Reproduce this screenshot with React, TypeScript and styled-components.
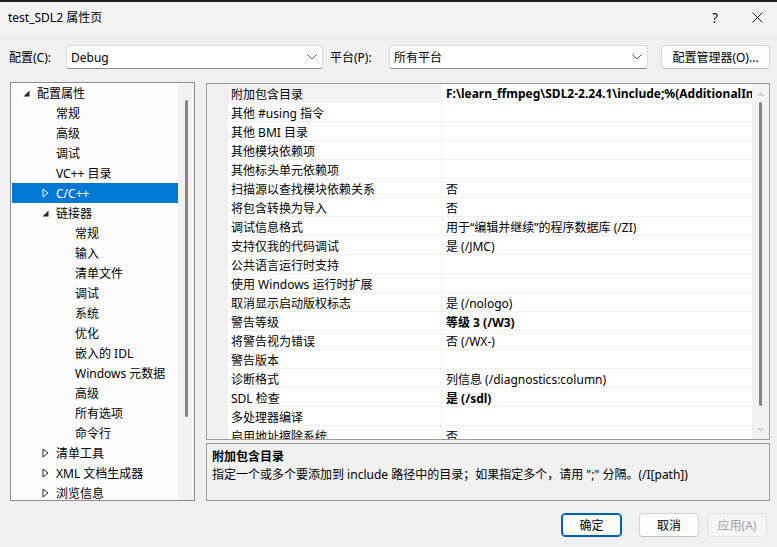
import React from "react";
import styled, { createGlobalStyle, css } from "styled-components";

const FONT = `"Noto Sans", "Noto Sans CJK SC", sans-serif`;

const GlobalStyle = createGlobalStyle`
  html, body { margin: 0; padding: 0; }
  body {
    background: #f0f0f0;
    font-family: ${FONT};
    font-size: 12px;
    color: #000;
  }
  * { box-sizing: border-box; }
`;

const Window = styled.div`
  width: 777px;
  height: 547px;
  display: flex;
  flex-direction: column;
  background: #f0f0f0;
  overflow: hidden;
`;

const TopEdge = styled.div`
  height: 2px;
  background: #202020;
  flex: none;
`;

const TitleBar = styled.div`
  height: 31px;
  flex: none;
  display: flex;
  align-items: center;
  padding-left: 8px;
  background: #f3f3f3;
`;

const TitleText = styled.div`
  flex: 1;
  font-size: 12px;
  line-height: 16px;
`;

const TitleButton = styled.div<{ $w: number }>`
  width: ${(p) => p.$w}px;
  height: 31px;
  display: flex;
  align-items: center;
  justify-content: center;
  font-size: 14px;
  color: #1a1a1a;
`;

const ConfigRow = styled.div`
  flex: none;
  display: flex;
  align-items: center;
  height: 24px;
  margin-top: 12px;
  padding-left: 9px;
`;

const FieldLabel = styled.div<{ $w: number; $pad?: number }>`
  width: ${(p) => p.$w}px;
  padding-left: ${(p) => p.$pad ?? 0}px;
  flex: none;
  white-space: nowrap;
`;

const Select = styled.div<{ $w: number }>`
  width: ${(p) => p.$w}px;
  height: 24px;
  flex: none;
  display: flex;
  align-items: center;
  justify-content: space-between;
  padding: 0 5px 0 4px;
  background: #ffffff;
  border: 1px solid #d9d9d9;
  border-bottom-color: #8a8a8a;
  border-radius: 3px;
`;

const PushButton = styled.div<{ $w: number; $primary?: boolean; $disabled?: boolean }>`
  width: ${(p) => p.$w}px;
  height: 24px;
  flex: none;
  display: flex;
  align-items: center;
  justify-content: center;
  background: #fdfdfd;
  border: 1px solid #d3d3d3;
  border-bottom-color: #c0c0c0;
  border-radius: 4px;
  white-space: nowrap;
  ${(p) =>
    p.$primary &&
    css`
      border: 1px solid #005fb8;
      box-shadow: inset 0 0 0 1px #005fb8;
      margin-right: 9px;
    `}
  ${(p) =>
    p.$disabled &&
    css`
      color: #a2a2a2;
      background: #f5f5f5;
      border-color: #e3e3e3;
    `}
`;

const Main = styled.div`
  flex: none;
  display: flex;
  gap: 11px;
  margin-top: 13px;
  padding: 0 7px 0 10px;
  height: 420px;
`;

const Tree = styled.div`
  width: 185px;
  height: 419px;
  flex: none;
  display: flex;
  border: 1px solid #8e8e8e;
  background: #fcfcfc;
  overflow: hidden;
`;

const TreeList = styled.div`
  flex: 1;
  padding: 0 0 0 1px;
`;

const TreeRow = styled.div<{ $level: number; $selected?: boolean }>`
  height: 20px;
  display: flex;
  align-items: center;
  padding-left: ${(p) => 6 + p.$level * 19}px;
  white-space: nowrap;
  ${(p) =>
    p.$selected &&
    css`
      background: #0078d4;
      color: #ffffff;
    `}
`;

const Expander = styled.div`
  width: 19px;
  height: 20px;
  flex: none;
  display: flex;
  align-items: center;
  justify-content: flex-start;
  padding-left: 5px;
`;

const VScroll = styled.div<{ $w: number }>`
  width: ${(p) => p.$w}px;
  flex: none;
  background: #f1f1f1;
  display: flex;
  flex-direction: column;
  align-items: center;
`;

const ScrollArrow = styled.div`
  height: 18px;
  flex: none;
  display: flex;
  align-items: center;
  justify-content: center;
`;

const ScrollSpacer = styled.div`
  flex: 1;
`;

const Thumb = styled.div<{ $top: number; $height: number }>`
  width: 3px;
  margin-top: ${(p) => p.$top}px;
  height: ${(p) => p.$height}px;
  background: #858585;
  border-radius: 2px;
  flex: none;
`;

const RightCol = styled.div`
  width: 564px;
  flex: none;
  display: flex;
  flex-direction: column;
  gap: 3px;
  padding-top: 1px;
`;

const Grid = styled.div`
  height: 357px;
  flex: none;
  display: flex;
  border: 1px solid #9a9a9a;
  background: #ffffff;
  overflow: hidden;
`;

const GridBody = styled.div`
  flex: 1;
  display: flex;
  overflow: hidden;
`;

const Gutter = styled.div`
  width: 21px;
  flex: none;
  background: #f0f0f0;
`;

const Rows = styled.div`
  flex: 1;
  display: flex;
  flex-direction: column;
`;

const PropRow = styled.div`
  height: 19px;
  flex: none;
  display: grid;
  grid-template-columns: 214px 1fr;
  border-bottom: 1px solid #f0f0f0;
`;

const NameCell = styled.div<{ $active?: boolean }>`
  padding-left: 3px;
  padding-top: 1px;
  display: flex;
  align-items: center;
  border-right: 1px solid #f0f0f0;
  white-space: nowrap;
  overflow: hidden;
  background: ${(p) => (p.$active ? "#f3f3f3" : "#ffffff")};
`;

const ValueCell = styled.div<{ $bold?: boolean }>`
  padding-left: 4px;
  padding-top: 1px;
  display: flex;
  align-items: center;
  white-space: nowrap;
  overflow: hidden;
  font-weight: ${(p) => (p.$bold ? 700 : 400)};
`;

const Description = styled.div`
  height: 58px;
  flex: none;
  border: 1px solid #9a9a9a;
  background: #f0f0f0;
  padding: 4px 5px;
  display: flex;
  flex-direction: column;
`;

const DescTitle = styled.div`
  font-weight: 700;
  line-height: 18px;
`;

const DescText = styled.div`
  line-height: 18px;
  white-space: nowrap;
`;

const Footer = styled.div`
  flex: none;
  display: flex;
  justify-content: flex-end;
  align-items: center;
  gap: 8px;
  margin-top: 11px;
  padding-right: 10px;
`;

const Chevron = () => (
  <svg width="10" height="6" viewBox="0 0 10 6">
    <path d="M0.5 0.5 L5 5 L9.5 0.5" fill="none" stroke="#5a5a5a" strokeWidth="1" />
  </svg>
);

const ExpandedArrow = () => (
  <svg width="7" height="7" viewBox="0 0 7 7">
    <path d="M6.5 0.5 L6.5 6.5 L0.5 6.5 Z" fill="#262626" />
  </svg>
);

const CollapsedArrow = ({ color }: { color: string }) => (
  <svg width="7" height="10" viewBox="0 0 7 10">
    <path d="M1 1 L6 5 L1 9 Z" fill="none" stroke={color} strokeWidth="1" />
  </svg>
);

const UpArrow = () => (
  <svg width="8" height="5" viewBox="0 0 8 5">
    <path d="M0 5 L4 0.5 L8 5 Z" fill="#d4d4d4" />
  </svg>
);

const DownArrow = () => (
  <svg width="8" height="5" viewBox="0 0 8 5">
    <path d="M0 0 L4 4.5 L8 0 Z" fill="#d4d4d4" />
  </svg>
);

type TreeItem = { label: string; level: number; state?: "open" | "closed"; selected?: boolean };

const treeItems: TreeItem[] = [
  { label: "配置属性", level: 0, state: "open" },
  { label: "常规", level: 1 },
  { label: "高级", level: 1 },
  { label: "调试", level: 1 },
  { label: "VC++ 目录", level: 1 },
  { label: "C/C++", level: 1, state: "closed", selected: true },
  { label: "链接器", level: 1, state: "open" },
  { label: "常规", level: 2 },
  { label: "输入", level: 2 },
  { label: "清单文件", level: 2 },
  { label: "调试", level: 2 },
  { label: "系统", level: 2 },
  { label: "优化", level: 2 },
  { label: "嵌入的 IDL", level: 2 },
  { label: "Windows 元数据", level: 2 },
  { label: "高级", level: 2 },
  { label: "所有选项", level: 2 },
  { label: "命令行", level: 2 },
  { label: "清单工具", level: 1, state: "closed" },
  { label: "XML 文档生成器", level: 1, state: "closed" },
  { label: "浏览信息", level: 1, state: "closed" },
];

type Prop = { name: string; value?: string; bold?: boolean };

const props: Prop[] = [
  { name: "附加包含目录", value: "F:\\learn_ffmpeg\\SDL2-2.24.1\\include;%(AdditionalIncludeDirectories)", bold: true },
  { name: "其他 #using 指令" },
  { name: "其他 BMI 目录" },
  { name: "其他模块依赖项" },
  { name: "其他标头单元依赖项" },
  { name: "扫描源以查找模块依赖关系", value: "否" },
  { name: "将包含转换为导入", value: "否" },
  { name: "调试信息格式", value: "用于“编辑并继续”的程序数据库 (/ZI)" },
  { name: "支持仅我的代码调试", value: "是 (/JMC)" },
  { name: "公共语言运行时支持" },
  { name: "使用 Windows 运行时扩展" },
  { name: "取消显示启动版权标志", value: "是 (/nologo)" },
  { name: "警告等级", value: "等级 3 (/W3)", bold: true },
  { name: "将警告视为错误", value: "否 (/WX-)" },
  { name: "警告版本" },
  { name: "诊断格式", value: "列信息 (/diagnostics:column)" },
  { name: "SDL 检查", value: "是 (/sdl)", bold: true },
  { name: "多处理器编译" },
  { name: "启用地址擦除系统", value: "否" },
];

export default function App() {
  return (
    <>
      <GlobalStyle />
      <Window>
        <TopEdge />
        <TitleBar>
          <TitleText>test_SDL2 属性页</TitleText>
          <TitleButton $w={44}>?</TitleButton>
          <TitleButton $w={40}>
            <svg width="11" height="11" viewBox="0 0 11 11">
              <path d="M0.5 0.5 L10.5 10.5 M10.5 0.5 L0.5 10.5" stroke="#1a1a1a" strokeWidth="1" />
            </svg>
          </TitleButton>
        </TitleBar>

        <ConfigRow>
          <FieldLabel $w={57}>配置(C):</FieldLabel>
          <Select $w={257}>
            <span>Debug</span>
            <Chevron />
          </Select>
          <FieldLabel $w={66} $pad={7}>平台(P):</FieldLabel>
          <Select $w={259}>
            <span>所有平台</span>
            <Chevron />
          </Select>
          <FieldLabel $w={13} />
          <PushButton $w={109}>配置管理器(O)...</PushButton>
        </ConfigRow>

        <Main>
          <Tree>
            <TreeList>
              {treeItems.map((t, i) => (
                <TreeRow key={i} $level={t.level} $selected={t.selected}>
                  <Expander>
                    {t.state === "open" && <ExpandedArrow />}
                    {t.state === "closed" && <CollapsedArrow color={t.selected ? "#ffffff" : "#262626"} />}
                  </Expander>
                  <span>{t.label}</span>
                </TreeRow>
              ))}
            </TreeList>
            <VScroll $w={16}>
              <Thumb $top={17} $height={317} />
            </VScroll>
          </Tree>

          <RightCol>
            <Grid>
              <GridBody>
                <Gutter />
                <Rows>
                  {props.map((p, i) => (
                    <PropRow key={i}>
                      <NameCell $active={i === 0}>{p.name}</NameCell>
                      <ValueCell $bold={p.bold}>{p.value ?? ""}</ValueCell>
                    </PropRow>
                  ))}
                </Rows>
              </GridBody>
              <VScroll $w={17}>
                <ScrollArrow>
                  <UpArrow />
                </ScrollArrow>
                <Thumb $top={0} $height={304} />
                <ScrollSpacer />
                <ScrollArrow>
                  <DownArrow />
                </ScrollArrow>
              </VScroll>
            </Grid>
            <Description>
              <DescTitle>附加包含目录</DescTitle>
              <DescText>指定一个或多个要添加到 include 路径中的目录；如果指定多个，请用 ";" 分隔。(/I[path])</DescText>
            </Description>
          </RightCol>
        </Main>

        <Footer>
          <PushButton $w={61} $primary>确定</PushButton>
          <PushButton $w={60}>取消</PushButton>
          <PushButton $w={60} $disabled>应用(A)</PushButton>
        </Footer>
      </Window>
    </>
  );
}
